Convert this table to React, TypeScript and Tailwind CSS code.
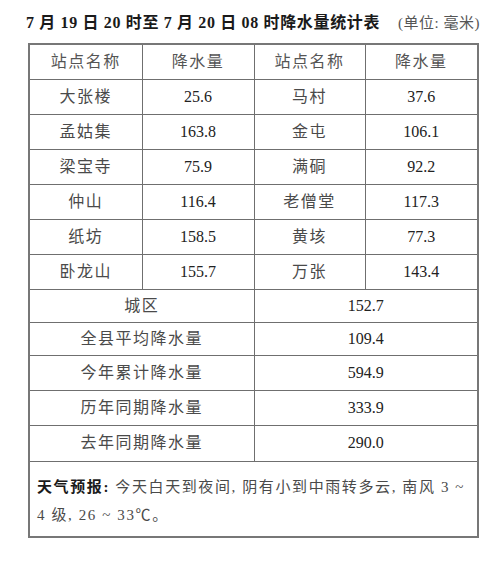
import React from "react";

const font = { fontFamily: '"Liberation Serif", "Noto Sans CJK SC", serif' };

const stations: [string, string, string, string][] = [
  ["大张楼", "25.6", "马村", "37.6"],
  ["孟姑集", "163.8", "金屯", "106.1"],
  ["梁宝寺", "75.9", "满硐", "92.2"],
  ["仲山", "116.4", "老僧堂", "117.3"],
  ["纸坊", "158.5", "黄垓", "77.3"],
  ["卧龙山", "155.7", "万张", "143.4"],
];

const summary: [string, string, string][] = [
  ["城区", "152.7", "h-[33px]"],
  ["全县平均降水量", "109.4", "h-[33px]"],
  ["今年累计降水量", "594.9", "h-[35px]"],
  ["历年同期降水量", "333.9", "h-[35px]"],
  ["去年同期降水量", "290.0", "h-[36px]"],
];

const cell = "border border-[#6f6f6f] text-center align-middle p-0";

export default function App() {
  return (
    <div className="w-[500px] h-[569px] bg-white text-[#333]" style={font}>
      <div className="pt-[13px] pl-[26px] flex items-baseline whitespace-nowrap">
        <span className="shrink-0 text-[16px] font-bold tracking-[0.65px] text-[#1a1a1a] leading-[20px]">
          7 月 19 日 20 时至 7 月 20 日 08 时降水量统计表
        </span>
        <span className="shrink-0 ml-[18px] text-[15px] text-[#555] leading-[20px] tracking-[0.5px]">
          (单位: 毫米)
        </span>
      </div>
      <table
        className="ml-[28px] mt-[10px] w-[449px] border-collapse border-2 border-[#777] table-fixed text-[16px]"
      >
        <colgroup>
          <col className="w-[113px]" />
          <col className="w-[112px]" />
          <col className="w-[111px]" />
          <col className="w-[113px]" />
        </colgroup>
        <tbody>
          <tr className="h-[35px]">
            <td className={`${cell} tracking-[1.5px] text-[#555]`}>站点名称</td>
            <td className={`${cell} tracking-[1.5px] text-[#555]`}>降水量</td>
            <td className={`${cell} tracking-[1.5px] text-[#555]`}>站点名称</td>
            <td className={`${cell} tracking-[1.5px] text-[#555]`}>降水量</td>
          </tr>
          {stations.map((r, i) => (
            <tr key={i} className="h-[35px]">
              <td className={`${cell} tracking-[1.5px] text-[#4a4a4a]`}>{r[0]}</td>
              <td className={`${cell} text-[#222]`}>{r[1]}</td>
              <td className={`${cell} tracking-[1.5px] text-[#4a4a4a]`}>{r[2]}</td>
              <td className={`${cell} text-[#222]`}>{r[3]}</td>
            </tr>
          ))}
          {summary.map((r, i) => (
            <tr key={i} className={r[2]}>
              <td colSpan={2} className={`${cell} tracking-[1.5px] text-[#4a4a4a]`}>
                {r[0]}
              </td>
              <td colSpan={2} className={`${cell} text-[#222]`}>
                {r[1]}
              </td>
            </tr>
          ))}
          <tr className="h-[76px]">
            <td colSpan={4} className="border border-[#6f6f6f] align-top p-0">
              <div className="pt-[11px] pl-[7px] pr-[4px] text-[15px] leading-[28px] tracking-[1.6px] text-[#4a4a4a] whitespace-nowrap">
                <span className="font-bold text-[#1a1a1a]">天气预报:</span> 今天白天到夜间, 阴有小到中雨转多云, 南风 3 ~
                <br />
                4 级, 26 ~ 33℃。
              </div>
            </td>
          </tr>
        </tbody>
      </table>
    </div>
  );
}
